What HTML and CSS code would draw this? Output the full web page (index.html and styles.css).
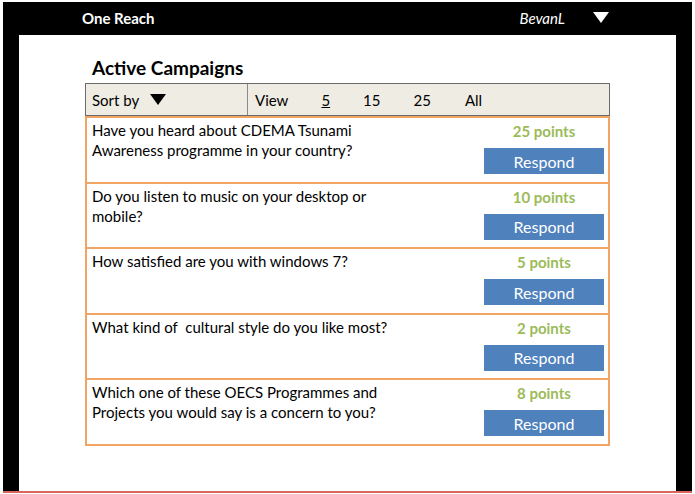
FILE: index.html
```html
<!DOCTYPE html>
<html lang="en">
<head>
    <meta charset="UTF-8">
    <meta name="viewport" content="width=device-width, initial-scale=1.0">
    <title>One Reach - Active Campaigns</title>
    <link rel="stylesheet" href="styles.css">
</head>
<body>
    <div class="frame">
        <div class="topbar">
            <div class="brand">One Reach</div>
            <div class="user">
                <span class="user-name">BevanL</span>
                <span class="tri tri-white"></span>
            </div>
        </div>

        <div class="main">
            <h1>Active Campaigns</h1>

            <div class="toolbar">
                <div class="sort">Sort by <span class="tri tri-black"></span></div>
                <div class="view">
                    <span>View</span>
                    <span class="opt active">5</span>
                    <span class="opt">15</span>
                    <span class="opt">25</span>
                    <span class="opt">All</span>
                </div>
            </div>

            <div class="campaigns">
                <div class="campaign">
                    <div class="question">Have you heard about CDEMA Tsunami<br>Awareness programme in your country?</div>
                    <div class="action">
                        <div class="points">25 points</div>
                        <button class="respond">Respond</button>
                    </div>
                </div>
                <div class="campaign">
                    <div class="question">Do you listen to music on your desktop or<br>mobile?</div>
                    <div class="action">
                        <div class="points">10 points</div>
                        <button class="respond">Respond</button>
                    </div>
                </div>
                <div class="campaign">
                    <div class="question">How satisfied are you with windows 7?</div>
                    <div class="action">
                        <div class="points">5 points</div>
                        <button class="respond">Respond</button>
                    </div>
                </div>
                <div class="campaign">
                    <div class="question">What kind of &nbsp;cultural style do you like most?</div>
                    <div class="action">
                        <div class="points">2 points</div>
                        <button class="respond">Respond</button>
                    </div>
                </div>
                <div class="campaign">
                    <div class="question">Which one of these OECS Programmes and<br>Projects you would say is a concern to you?</div>
                    <div class="action">
                        <div class="points">8 points</div>
                        <button class="respond">Respond</button>
                    </div>
                </div>
            </div>
        </div>
    </div>
</body>
</html>
```

FILE: styles.css
```css
body {
    margin: 0;
    padding: 2px 3px 0 3px;
    background-color: #fff;
    font-family: Lato, "Open Sans", sans-serif;
    color: #000;
}
.frame {
    background-color: #000;
    padding: 0 16px;
    height: 491px;
    border-bottom: 2px solid #d9665e;
    box-sizing: border-box;
}
.topbar {
    height: 33px;
    display: flex;
    align-items: center;
    justify-content: space-between;
    color: #fff;
    padding: 0 67px 0 63px;
}
.brand {
    font-weight: bold;
    font-size: 15px;
    margin-top: -2px;
}
.user {
    display: flex;
    align-items: center;
    gap: 28px;
    margin-top: -2px;
}
.user-name {
    font-style: italic;
    font-size: 15px;
    margin-left: -2px;
}
.tri {
    display: inline-block;
    width: 0;
    height: 0;
    border-left: 8.5px solid transparent;
    border-right: 8.5px solid transparent;
}
.tri-white {
    border-top: 11px solid #fff;
}
.tri-black {
    border-top: 11px solid #000;
    margin-left: 11px;
}
.main {
    background-color: #fff;
    height: 456px;
    padding: 0 66px;
    box-sizing: border-box;
    overflow: hidden;
}
h1 {
    margin: 0;
    padding: 17px 0 0 7px;
    font-size: 19px;
    font-weight: bold;
    line-height: 31px;
}
.toolbar {
    display: flex;
    height: 33px;
    box-sizing: border-box;
    border: 1px solid #6b6b6b;
    background-color: #eeece3;
    font-size: 15px;
}
.sort {
    width: 162px;
    border-right: 1px solid #8a8a8a;
    display: flex;
    align-items: center;
    padding-left: 6px;
    box-sizing: border-box;
}
.view {
    display: flex;
    align-items: center;
    padding-left: 7px;
}
.view span:nth-child(2) { margin-left: 33px; }
.view span:nth-child(3) { margin-left: 33px; }
.view span:nth-child(4) { margin-left: 33px; }
.view span:nth-child(5) { margin-left: 34px; }
.opt.active {
    text-decoration: underline;
}
.campaigns {
    border: 2px solid #f1a463;
    border-bottom: none;
}
.campaign {
    display: flex;
    height: 65.5px;
    box-sizing: border-box;
    padding: 3px 4px 0 5px;
    border-bottom: 2px solid #f1a463;
}
.question {
    flex: 1;
    font-size: 15px;
    line-height: 20px;
    margin-top: -1px;
}
.action {
    width: 120px;
    display: flex;
    flex-direction: column;
    align-items: center;
}
.points {
    color: #9bbb59;
    font-weight: bold;
    font-size: 15px;
    line-height: 20px;
}
.respond {
    margin-top: 7px;
    width: 120px;
    height: 26px;
    border: none;
    background-color: #4f81bd;
    color: #fff;
    font-family: Lato, "Open Sans", sans-serif;
    font-size: 16px;
    padding: 0;
    cursor: pointer;
}
```
